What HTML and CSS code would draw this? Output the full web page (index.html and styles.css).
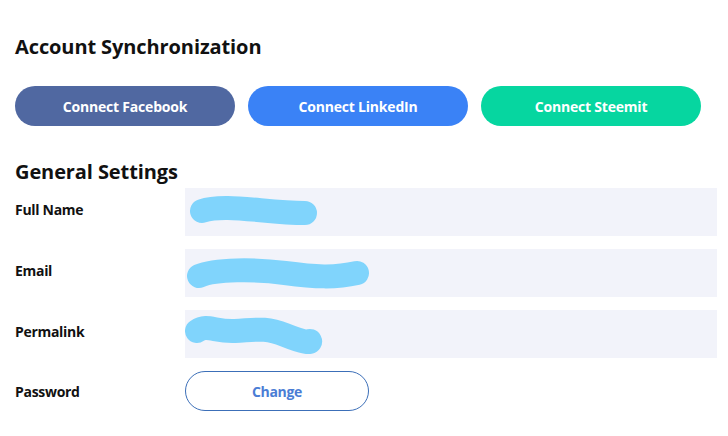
FILE: index.html
```html
<!DOCTYPE html>
<html>
<head>
<meta charset="utf-8">
<link rel="stylesheet" href="styles.css">
</head>
<body>
<div class="page">
  <h2 class="title">Account Synchronization</h2>
  <div class="sync">
    <button class="btn fb">Connect Facebook</button>
    <button class="btn li">Connect LinkedIn</button>
    <button class="btn st">Connect Steemit</button>
  </div>
  <h2 class="title general">General Settings</h2>
  <div class="form">
    <div class="row">
      <label class="label">Full Name</label>
      <div class="field">
        <svg class="scribble" width="532" height="48" viewBox="0 0 532 48"><path d="M17 23 C 40 15, 80 25, 120 25" /></svg>
      </div>
    </div>
    <div class="row">
      <label class="label">Email</label>
      <div class="field">
        <svg class="scribble" width="532" height="48" viewBox="0 0 532 48"><path d="M14 27 C 30 20, 70 20, 100 24 S 150 29, 172 24" /></svg>
      </div>
    </div>
    <div class="row">
      <label class="label">Permalink</label>
      <div class="field">
        <svg class="scribble" width="532" height="48" viewBox="0 0 532 48"><path d="M12 21 C 22 14, 30 22, 50 21 S 80 17, 100 25 S 126 33, 125 31" /></svg>
      </div>
    </div>
    <div class="row short">
      <label class="label">Password</label>
      <button class="change">Change</button>
    </div>
  </div>
</div>
</body>
</html>
```
FILE: styles.css
```css
* { box-sizing: border-box; }
html, body { margin: 0; padding: 0; background: #fff; }
body { font-family: "Open Sans", "Liberation Sans", sans-serif; color: #111; }
.page { padding: 34px 11px 0 15px; }
.title {
  margin: 0;
  font-size: 20px;
  font-weight: 700;
  line-height: 26px;
  letter-spacing: -0.1px;
}
.sync {
  display: flex;
  gap: 13px;
  margin-top: 26px;
}
.btn {
  width: 220px;
  height: 40px;
  border: none;
  border-radius: 20px;
  color: #fff;
  font-family: "Open Sans", sans-serif;
  font-weight: 700;
  font-size: 14px;
  letter-spacing: -0.2px;
  padding: 0;
}
.fb { background: #5068a1; }
.li { background: #3a82f6; }
.st { background: #06d6a0; }
.general { margin-top: 33px; }
.form {
  display: flex;
  flex-direction: column;
  gap: 13px;
  margin-top: 3px;
}
.row {
  display: flex;
  align-items: center;
  height: 48px;
}
.row.short { height: 40px; }
.label {
  width: 170px;
  font-size: 14px;
  font-weight: 700;
  letter-spacing: -0.3px;
  position: relative;
  top: -3px;
}
.short .label { top: 0; }
.field {
  position: relative;
  flex: 1;
  height: 48px;
  background: #f2f3fa;
}
.scribble { position: absolute; left: 0; top: 0; }
.scribble path {
  fill: none;
  stroke: #80d4fc;
  stroke-width: 24;
  stroke-linecap: round;
  stroke-linejoin: round;
}
.change {
  width: 184px;
  height: 40px;
  border: 1px solid #3c6fb8;
  border-radius: 20px;
  background: #fff;
  color: #4a7dd5;
  font-family: "Open Sans", sans-serif;
  font-weight: 700;
  font-size: 14px;
  letter-spacing: -0.3px;
  padding: 0;
}
```
